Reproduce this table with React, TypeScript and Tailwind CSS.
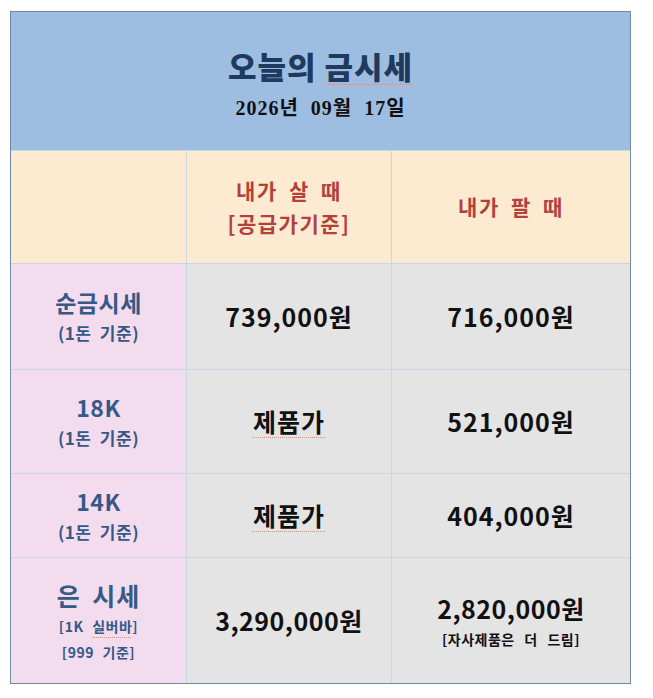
export default function App() {
  const rows = [
    { label: '순금시세', subs: ['(1돈 기준)'], buy: '739,000원', sell: '716,000원', h: 'h-[106px]' },
    { label: '18K', subs: ['(1돈 기준)'], buy: '제품가', sell: '521,000원', h: 'h-[104px]', squiggle: true },
    { label: '14K', subs: ['(1돈 기준)'], buy: '제품가', sell: '404,000원', h: 'h-[84px]', squiggle: true },
  ];

  const squiggle = 'underline decoration-dotted decoration-[#e0907a] decoration-1 underline-offset-[5px]';

  return (
    <div className="min-h-screen bg-white pt-[11px] pl-[10px]" style={{ fontFamily: '"Noto Sans CJK KR", "Noto Sans", sans-serif' }}>
      <div className="w-[621px] border border-[#7089a8]">
        <div className="h-[139px] bg-[#9dbde1] flex flex-col items-center justify-center border-b border-[#c9d6e4]">
          <div className="text-[31px] font-black text-[#1f3a5c] leading-none tracking-[1px] mt-[6px]">
            오늘의 <span className={squiggle}>금시세</span>
          </div>
          <div
            className="mt-[17px] text-[20px] font-bold text-[#111] leading-none tracking-[1px] [word-spacing:6px]"
            style={{ fontFamily: '"Liberation Serif", "Noto Sans CJK KR", serif' }}
          >
            2026년 09월 17일
          </div>
        </div>

        <div className="grid grid-cols-[176px_205px_238px]">
          <div className="h-[113px] bg-[#fcebd0] border-r border-b border-[#c9d6e4]" />
          <div className="h-[113px] bg-[#fcebd0] border-r border-b border-[#c9d6e4] flex flex-col items-center justify-center text-[21px] font-bold text-[#b3403d] leading-[33px] tracking-[1.5px] [word-spacing:5px]">
            <div>내가 살 때</div>
            <div>[공급가기준]</div>
          </div>
          <div className="h-[113px] bg-[#fcebd0] border-b border-[#c9d6e4] flex items-center justify-center text-[21px] font-bold text-[#b3403d] tracking-[1.5px] [word-spacing:5px]">
            내가 팔 때
          </div>

          {rows.map((r, i) => (
            <div key={i} className="contents">
              <div className={`${r.h} bg-[#f4dcef] border-r border-b border-[#c9d6e4] flex flex-col items-center justify-center text-[#365986] font-bold`}>
                <div className="text-[23px] leading-[32px] tracking-[0.5px]">{r.label}</div>
                {r.subs.map((s) => (
                  <div key={s} className="text-[17px] leading-[30px] tracking-[0.5px] [word-spacing:4px]">{s}</div>
                ))}
              </div>
              <div className={`${r.h} bg-[#e4e4e4] border-r border-b border-[#c9d6e4] flex items-center justify-center text-[25px] font-bold text-[#111] tracking-[1px]`}>
                <span className={r.squiggle ? squiggle : ''}>{r.buy}</span>
              </div>
              <div className={`${r.h} bg-[#e4e4e4] border-b border-[#c9d6e4] flex items-center justify-center text-[25px] font-bold text-[#111] tracking-[1px]`}>
                {r.sell}
              </div>
            </div>
          ))}

          <div className="h-[125px] bg-[#f4dcef] border-r border-[#c9d6e4] flex flex-col items-center justify-center text-[#365986] font-bold">
            <div className="text-[25px] leading-[36px] tracking-[1px] [word-spacing:5px]">은 시세</div>
            <div className="text-[14px] leading-[26px] tracking-[0.5px] [word-spacing:5px]">
              [1K <span className={squiggle}>실버바</span>]
            </div>
            <div className="text-[14px] leading-[26px] tracking-[0.5px] [word-spacing:5px]">[999 기준]</div>
          </div>
          <div className="h-[125px] bg-[#e4e4e4] border-r border-[#c9d6e4] flex items-center justify-center text-[25px] font-bold text-[#111] tracking-[0.5px]">
            3,290,000원
          </div>
          <div className="h-[125px] bg-[#e4e4e4] flex flex-col items-center justify-center text-[#111] font-bold">
            <div className="text-[25px] leading-[36px] tracking-[0.5px]">2,820,000원</div>
            <div className="text-[14px] leading-[26px] tracking-[0.5px] [word-spacing:6px]">[자사제품은 더 드림]</div>
          </div>
        </div>
      </div>
    </div>
  );
}
